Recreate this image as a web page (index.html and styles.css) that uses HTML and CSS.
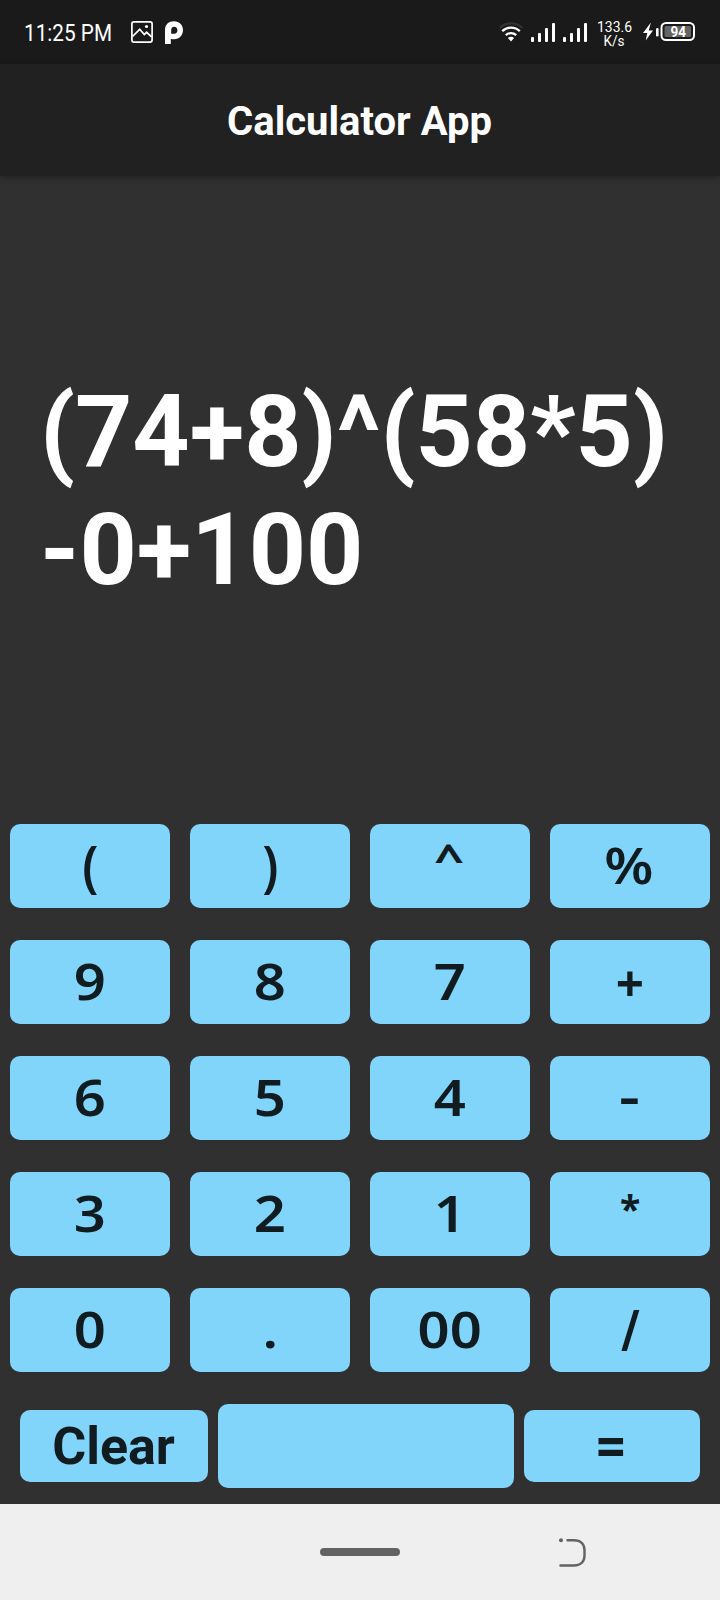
FILE: index.html
```html
<!DOCTYPE html>
<html lang="en">
<head>
<meta charset="utf-8">
<title>Calculator App</title>
<link rel="stylesheet" href="styles.css">
</head>
<body>
<div class="screen">
  <div class="status">
    <svg class="time" width="94" height="34" viewBox="0 0 94 34"><text x="3" y="26" textLength="88" lengthAdjust="spacingAndGlyphs">11:25 PM</text></svg>
    <svg class="picture" width="22" height="22" viewBox="0 0 22 22" fill="none" stroke="#fff" stroke-width="1.700"><rect x=".9" y=".9" width="20.200" height="20.200" rx="2"/><path d="M1.500 15.500 8.700 8.300l4.600 5.300 2.300-2.300 5 4.600"/><circle cx="15.500" cy="5.500" r="1.600" fill="#fff" stroke="none"/></svg>
    <svg class="brand" width="18" height="24" viewBox="0 0 18 24"><path fill="#fff" fill-rule="evenodd" d="M0 23V9C0 3.700 3.700.3 9 .3S18 4 18 9s-3.500 9.300-9 9.300c-1.200 0-2.200-.1-3.200-.5V23ZM9.200 5.700C7.200 5.700 6.200 7 6.200 9v3.700h3c2 0 3.200-1.500 3.200-3.500s-1.200-3.500-3.200-3.500Z"/></svg>
    <div class="status-right">
      <svg class="wifi" width="24" height="21" viewBox="0 0 24 21" fill="none" stroke-width="2.300"><path d="M.8 5.800C7-.1 17-.1 23.200 5.800" stroke="#333"/><path d="M3.200 9.200c5-4.800 12.600-4.800 17.600 0M6.800 13.200c3-2.800 7.400-2.800 10.400 0" stroke="#fff"/><path d="M8.900 15.900c1.800-1.400 4.400-1.400 6.200 0L12 19.500Z" fill="#fff"/></svg>
      <svg class="signal" width="25" height="20" viewBox="0 0 25 20" fill="#fff"><rect x="0" y="14" width="3" height="5" rx="1"/><rect x="7" y="10" width="3" height="9" rx="1"/><rect x="14" y="5" width="3" height="14" rx="1"/><rect x="21" y="0" width="3" height="19" rx="1"/></svg>
      <svg class="signal" width="25" height="20" viewBox="0 0 25 20" fill="#fff"><rect x="0" y="14" width="3" height="5" rx="1"/><rect x="7" y="10" width="3" height="9" rx="1"/><rect x="14" y="5" width="3" height="14" rx="1"/><rect x="21" y="0" width="3" height="19" rx="1"/></svg>
      <svg class="speed" width="38" height="38" viewBox="0 0 38 38"><text x="2" y="17.500" textLength="35" lengthAdjust="spacingAndGlyphs">133.6</text><text x="8.500" y="32" textLength="21" lengthAdjust="spacingAndGlyphs">K/s</text></svg>
      <svg class="battery" width="54" height="20" viewBox="0 0 54 20"><path d="M8.500 1 1 11h4.300L3.700 18.500 11 8.500H6.700L8.800 1Z" fill="#fff"/><rect x="14" y="6" width="2.600" height="8.500" rx="1.200" fill="#fff"/><rect x="19.500" y="1" width="32.500" height="17" rx="4.500" fill="none" stroke="#fff" stroke-width="2"/><rect x="22.500" y="4" width="26.500" height="11" rx="1.500" fill="#646464"/><text x="28.500" y="15" textLength="15.500" lengthAdjust="spacingAndGlyphs">94</text></svg>
    </div>
  </div>
  <header class="appbar">Calculator App</header>
  <main class="display"><div class="expression">(74+8)^(58*5)<br>-0+100</div></main>
  <div class="keys">
    <button class="key"><span class="paren">(</span></button><button class="key"><span class="paren">)</span></button><button class="key"><span class="caret">^</span></button><button class="key"><span class="percent">%</span></button>
    <button class="key"><span>9</span></button><button class="key"><span>8</span></button><button class="key"><span>7</span></button><button class="key"><span class="plus">+</span></button>
    <button class="key"><span>6</span></button><button class="key"><span>5</span></button><button class="key"><span>4</span></button><button class="key"><span class="minus">-</span></button>
    <button class="key"><span>3</span></button><button class="key"><span>2</span></button><button class="key"><span>1</span></button><button class="key"><span class="times">*</span></button>
    <button class="key"><span>0</span></button><button class="key"><span>.</span></button><button class="key"><span>00</span></button><button class="key"><span class="slash">/</span></button>
  </div>
  <div class="actions">
    <button class="key clear">Clear</button><button class="key blank" aria-label="Blank"></button><button class="key equals"><span class="equal-sign">=</span></button>
  </div>
  <nav class="navbar">
    <div class="home"></div>
    <svg class="back" width="28" height="30" viewBox="0 0 28 30" fill="none" stroke="#636363" stroke-width="2.400" stroke-linecap="round"><circle cx="2" cy="2.200" r="2" fill="#636363" stroke="none"/><path d="M8.500 2.200H15C22 2.200 25.500 6.500 25.500 12v5.500c0 6-3.500 10-10.500 10H1.500"/></svg>
  </nav>
</div>
</body>
</html>
```
FILE: styles.css
```css
* { box-sizing: border-box; }
body { margin: 0; background: #303030; font-family: Roboto, sans-serif; }
.screen { width: 720px; height: 1600px; display: flex; flex-direction: column; background: #303030; }
.status { height: 64px; flex: none; background: #1a1a1a; display: flex; align-items: flex-start; padding-left: 21px; }
.status text { fill: #fff; font-family: Roboto, sans-serif; }
.time { margin-top: 15px; font-size: 23.500px; }
.picture { margin: 21px 0 0 16px; }
.brand { margin: 21px 0 0 12px; }
.status-right { margin-left: auto; display: flex; padding-right: 24px; }
.wifi { margin: 22px 8px 0 0; }
.signal { margin: 23px 7px 0 0; }
.speed { margin: 14px 9px 0 0; font-size: 15px; }
.battery { margin-top: 22px; font-size: 15px; font-weight: 700; }
.appbar { height: 112px; flex: none; background: #212121; color: #fff; display: flex; align-items: center; justify-content: center; font-size: 40px; font-weight: 700; padding: 2px 1px 0 0; box-shadow: 0 1px 6px rgba(0, 0, 0, .35); }
.display { flex: 1; display: flex; align-items: center; padding: 0 40px 18px; }
.expression { color: #fff; font-size: 100px; line-height: 118px; font-weight: 700; white-space: nowrap; }
.keys { display: grid; grid-template-columns: repeat(4, 160px); grid-auto-rows: 84px; gap: 32px 20px; padding: 0 10px; }
.key { border: 0; padding: 0; border-radius: 10px; background: #81d4fa; color: #111c20; font: 600 52px/84px "Noto Sans", sans-serif; text-align: center; }
.key span { display: inline-block; font-weight: 650; transform: translate(0, -1px) scale(1.080, .970); }
.key .paren { font-weight: 600; transform: translateY(-2px) scale(.960, 1.080); }
.key .caret { font-weight: 700; transform: translate(-1px, -8px) scale(1, .760); }
.key .percent { font-weight: 600; transform: translate(-1px, -2px) scale(1.080, .980); }
.key .plus { font-weight: 700; transform: translate(0, 1px) scale(.950); }
.key .minus { transform: translate(-1px, -3px) scaleX(1.250); }
.key .times { font-weight: 700; transform: translate(0, -5px) scale(.720, .720); }
.key .slash { transform: translate(0, -1px) scale(.900, 1.120); }
.actions { display: flex; align-items: center; gap: 10px; padding: 32px 20px 16px; }
.clear, .equals { height: 72px; font: 700 52px/72px Roboto, sans-serif; }
.clear { width: 188px; padding: 1px 1px 0 0; }
.blank { width: 296px; height: 84px; }
.equals { width: 176px; padding: 0 2px 0 0; }
.key .equal-sign { font-weight: 700; transform: translateY(1px) scale(1.080, 1.080); }
.navbar { height: 96px; flex: none; display: grid; grid-template-columns: 320px 80px 1fr; align-items: center; background: #efefef; }
.home { grid-column: 2; width: 80px; height: 8px; border-radius: 4px; background: #636363; }
.back { margin: 1px 0 0 159px; }
```
